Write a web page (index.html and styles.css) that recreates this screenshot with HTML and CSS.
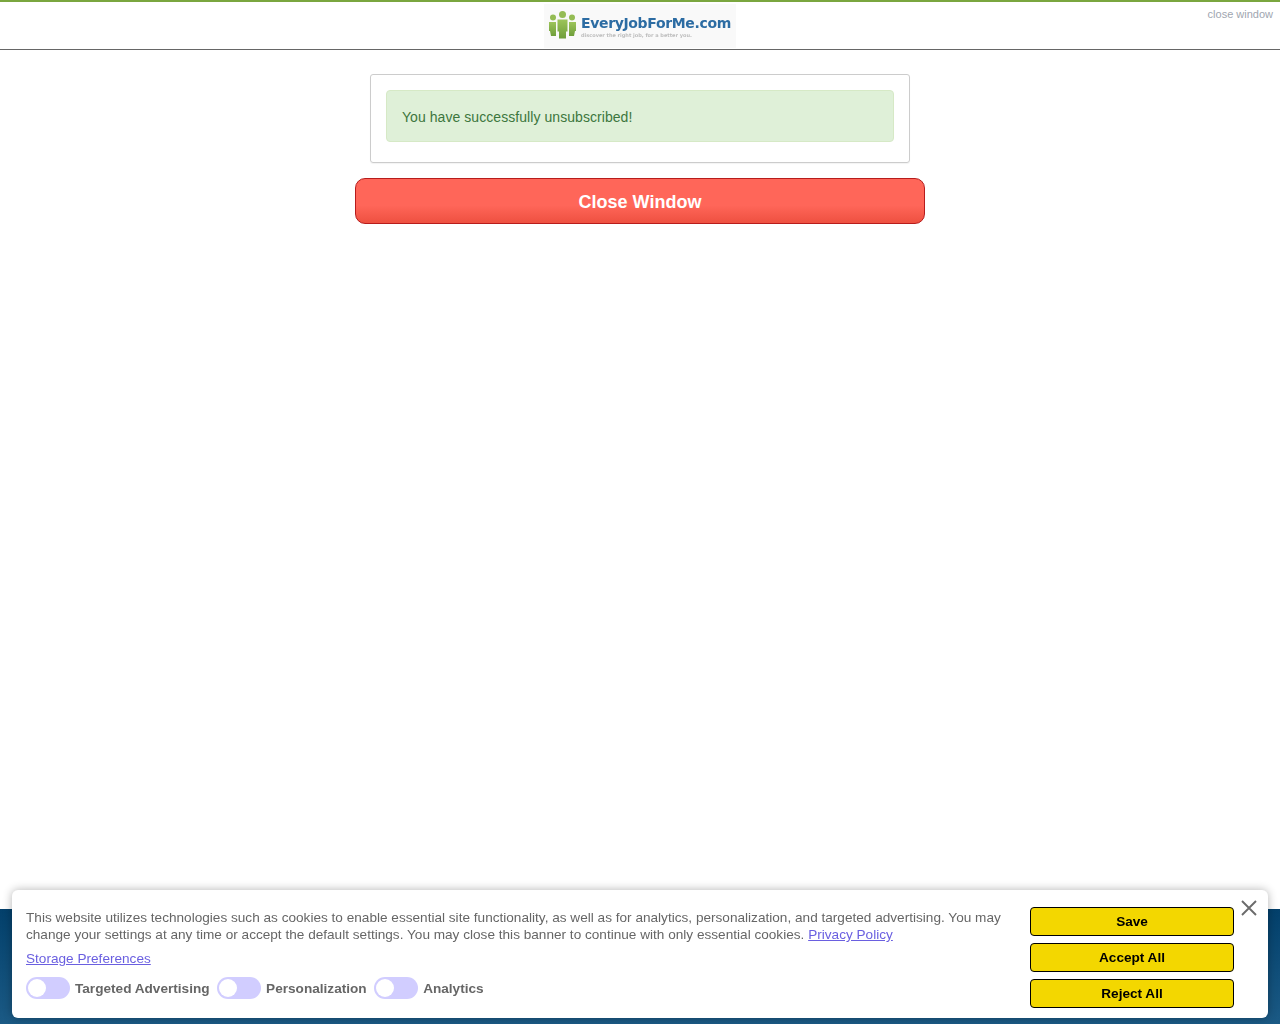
FILE: index.html
```html
<!DOCTYPE html>
<html lang="en">
<head>
<meta charset="utf-8">
<title>Unsubscribe</title>
<link rel="stylesheet" href="styles.css">
</head>
<body>
<header class="topbar">
  <div class="logo">
    <svg class="logo-icon" width="30" height="30" viewBox="0 0 30 30" aria-hidden="true">
      <defs>
        <linearGradient id="g" x1="0" y1="0" x2="0" y2="1"><stop offset="0" stop-color="#9cc45a"/><stop offset="1" stop-color="#6f9e3a"/></linearGradient>
      </defs>
      <circle cx="5" cy="7.5" r="3" fill="#94bc54"/>
      <circle cx="14.500" cy="4.500" r="3.500" fill="#94bc54"/>
      <circle cx="24" cy="7.500" r="3" fill="#94bc54"/>
      <path d="M1 12h7v14H3l-1-5H1zM21 12h7v9h-1l-1 5h-5z" fill="url(#g)"/>
      <path d="M9.500 9.500h10v12h-1.500v7h-7v-7H9.500z" fill="url(#g)"/>
    </svg>
    <div class="logo-text">
      <span class="logo-name">EveryJobForMe.com</span>
      <span class="logo-tag">discover the right job, for a better you.</span>
    </div>
  </div>
  <a class="close-link" href="#">close window</a>
</header>
<main class="content">
  <div class="panel">
    <div class="alert">You have successfully unsubscribed!</div>
  </div>
  <button class="close-btn" type="button">Close Window</button>
</main>
<footer class="footer-band"></footer>
<section class="banner">
  <div class="banner-main">
    <p class="banner-text">This website utilizes technologies such as cookies to enable essential site functionality, as well as for analytics, personalization, and targeted advertising. You may change your settings at any time or accept the default settings. You may close this banner to continue with only essential cookies. <a href="#">Privacy Policy</a></p>
    <p class="banner-prefs"><a href="#">Storage Preferences</a></p>
    <div class="toggles">
      <span class="toggle"></span><span class="toggle-label">Targeted Advertising</span>
      <span class="toggle"></span><span class="toggle-label">Personalization</span>
      <span class="toggle"></span><span class="toggle-label">Analytics</span>
    </div>
  </div>
  <div class="banner-actions">
    <button class="action" type="button">Save</button>
    <button class="action" type="button">Accept All</button>
    <button class="action" type="button">Reject All</button>
  </div>
  <svg class="banner-close" width="16" height="16" viewBox="0 0 16 16" aria-hidden="true">
    <path d="M1 1l14 14M15 1L1 15" stroke="#6b6b6b" stroke-width="1.900" fill="none"/>
  </svg>
</section>
</body>
</html>
```
FILE: styles.css
```css
* { box-sizing: border-box; }
html, body { height: 100%; }
body {
  margin: 0;
  min-height: 100vh;
  display: flex;
  flex-direction: column;
  background: #fff;
  font-family: "Liberation Sans", Arial, sans-serif;
}
.topbar {
  position: relative;
  height: 50px;
  border-top: 2px solid #7aa63f;
  border-bottom: 1px solid #666;
  display: flex;
  justify-content: center;
  align-items: flex-start;
  padding-top: 2px;
}
.logo {
  width: 192px;
  height: 44px;
  background: #f9f9f9;
  display: flex;
  align-items: flex-start;
  gap: 3px;
  padding: 6px 0 0 4px;
}
.logo-icon { filter: blur(0.4px); }
.logo-text { display: flex; flex-direction: column; padding-top: 4px; filter: blur(0.3px); }
.logo-name {
  font-family: "DejaVu Sans", sans-serif;
  font-weight: 700;
  font-size: 14px;
  line-height: 18px;
  letter-spacing: -0.350px;
  color: #2c6ca3;
  white-space: nowrap;
}
.logo-tag {
  font-family: "DejaVu Sans", sans-serif;
  font-weight: 700;
  font-size: 5px;
  line-height: 6px;
  color: #bdbdbd;
  white-space: nowrap;
}
.close-link {
  position: absolute;
  top: 6px;
  right: 7px;
  font-size: 11px;
  line-height: 13px;
  color: #a0a6b0;
  text-decoration: none;
}
.content {
  display: flex;
  flex-direction: column;
  align-items: center;
  padding-top: 24px;
}
.panel {
  width: 540px;
  height: 89px;
  border: 1px solid #ccc;
  border-radius: 3px;
  padding: 15px;
  box-shadow: 0 1px 1px rgba(0,0,0,.05);
}
.alert {
  height: 52px;
  background: #dff0d8;
  border: 1px solid #d6e9c6;
  border-radius: 4px;
  color: #3c763d;
  font-size: 14px;
  letter-spacing: 0.060px;
  line-height: 52px;
  padding-left: 15px;
}
.close-btn {
  width: 570px;
  height: 46px;
  margin-top: 15px;
  border: 1px solid #b71c1c;
  border-radius: 10px;
  background: linear-gradient(#ff6659 0%, #ff6659 60%, #ee5040 100%);
  color: #fff;
  font: 700 18px "Liberation Sans", Arial, sans-serif;
  padding: 2px 0 0;
}
.footer-band {
  margin-top: auto;
  height: 115px;
  background: linear-gradient(#03406b, #1b5a85);
}
.banner {
  position: fixed;
  left: 12px;
  right: 12px;
  bottom: 6px;
  height: 128px;
  background: #fff;
  border-radius: 6px;
  box-shadow: 0 0 10px rgba(0,0,0,.3);
  display: flex;
  justify-content: space-between;
  padding: 17px 34px 0 14px;
  color: #666;
  font-size: 13.600px;
  letter-spacing: 0.006px;
  line-height: 17px;
}
.banner-main { width: 988px; padding-top: 2px; }
.banner-text { margin: 0; }
.banner a { color: #6a5fe0; }
.banner-prefs { margin: 7px 0 0; }
.toggles {
  display: flex;
  align-items: center;
  margin-top: 10px;
}
.toggle {
  width: 44px;
  height: 22px;
  border-radius: 11px;
  background: #d1cdff;
  position: relative;
  margin-right: 5px;
}
.toggle::after {
  content: "";
  position: absolute;
  left: 2px;
  top: 2px;
  width: 18px;
  height: 18px;
  border-radius: 50%;
  background: #fff;
}
.toggle-label {
  font-weight: 700;
  margin-right: 7.500px;
}
.banner-actions {
  width: 204px;
  display: flex;
  flex-direction: column;
  gap: 7px;
}
.action {
  height: 29px;
  background: #f3d700;
  border: 1px solid #000;
  border-radius: 4px;
  color: #000;
  font: 700 13.600px "Liberation Sans", Arial, sans-serif;
  padding: 0 0 1px;
}
.banner-close {
  position: absolute;
  top: 10px;
  right: 11px;
}
```
